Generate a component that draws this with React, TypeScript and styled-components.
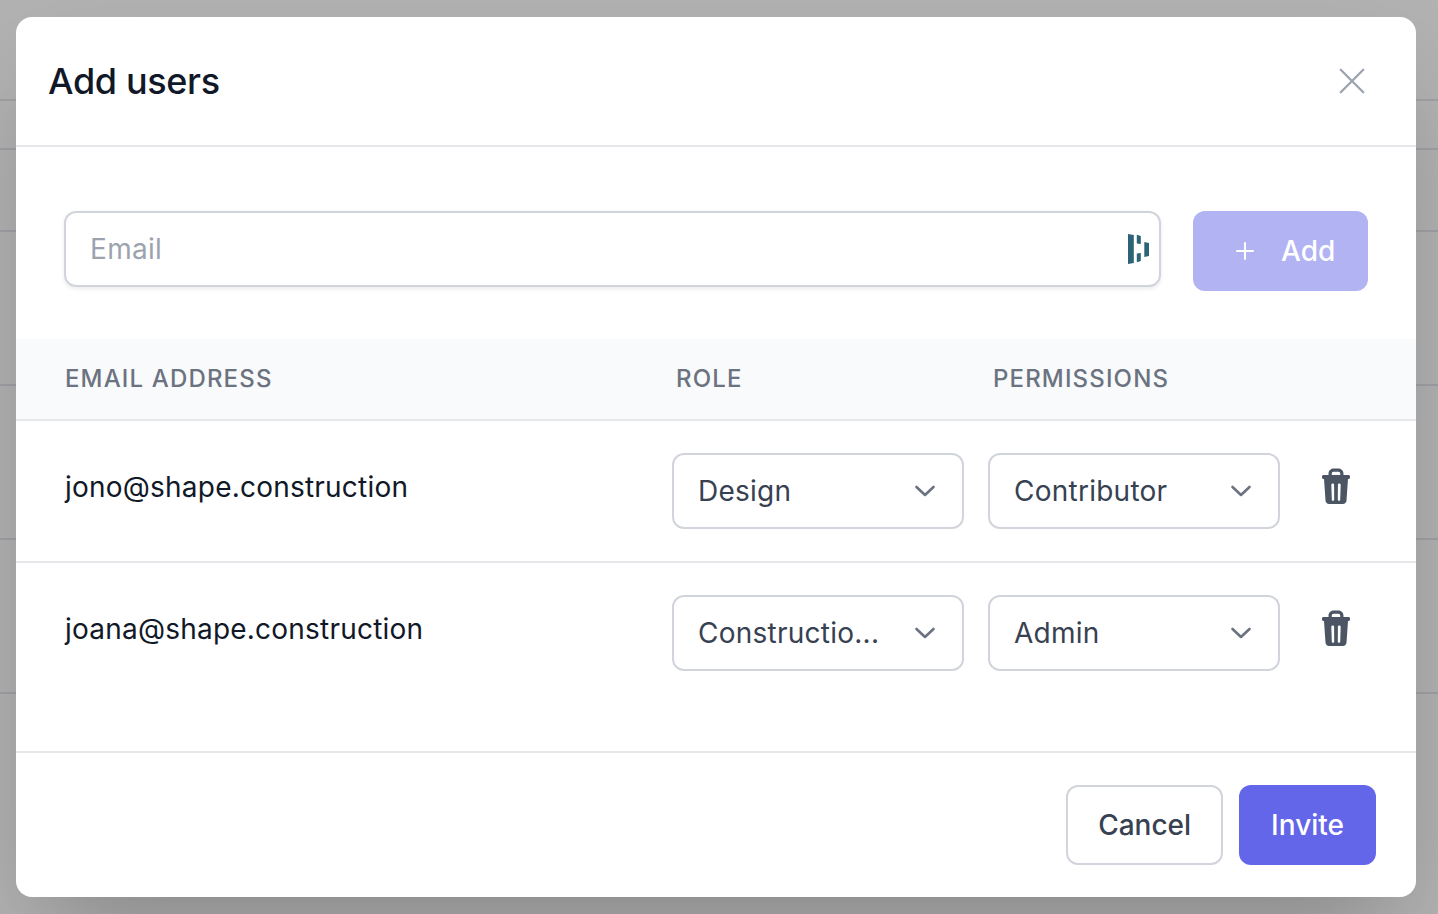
import React from 'react';
import styled, { createGlobalStyle } from 'styled-components';

const GlobalStyle = createGlobalStyle`
  html, body {
    margin: 0;
    height: 100%;
    overflow: hidden;
  }
  body {
    font-family: Inter, "Liberation Sans", sans-serif;
    -webkit-font-smoothing: antialiased;
  }
  * {
    box-sizing: border-box;
  }
`;

const Page = styled.div`
  position: relative;
  width: 1438px;
  height: 914px;
  overflow: hidden;
  background: #fff;
`;

const BehindRow = styled.div<{ $height: number }>`
  height: ${({ $height }) => $height}px;
  border-bottom: 2px solid #e5e7eb;
`;

const Backdrop = styled.div`
  position: absolute;
  inset: 0;
  background: rgba(0, 0, 0, 0.3);
`;

const Modal = styled.div`
  position: absolute;
  left: 16px;
  top: 17px;
  width: 1400px;
  height: 880px;
  background: #fff;
  border-radius: 16px;
  box-shadow: 0 50px 100px -24px rgba(0, 0, 0, 0.25);
  display: flex;
  flex-direction: column;
  overflow: hidden;
`;

const Header = styled.header`
  height: 130px;
  flex: none;
  border-bottom: 2px solid #e5e7eb;
  padding: 0 40px 0 32px;
  display: flex;
  align-items: center;
  justify-content: space-between;
`;

const Title = styled.h2`
  margin: 0;
  font-size: 36px;
  line-height: 48px;
  font-weight: 500;
  letter-spacing: -0.35px;
  color: #111827;
`;

const CloseButton = styled.button`
  width: 48px;
  height: 48px;
  padding: 0;
  border: none;
  background: none;
  color: #9ca3af;
  display: flex;
  align-items: center;
  justify-content: center;
`;

const AddRow = styled.div`
  flex: none;
  display: flex;
  align-items: flex-start;
  gap: 32px;
  padding: 64px 48px 48px;
`;

const InputWrap = styled.div`
  position: relative;
  flex: 1;
`;

const EmailInput = styled.input`
  display: block;
  width: 100%;
  height: 76px;
  padding: 0 24px;
  border: 2px solid #d1d5db;
  border-radius: 12px;
  box-shadow: 0 2px 4px rgba(0, 0, 0, 0.08);
  font: 400 28px Inter, sans-serif;
  letter-spacing: 0.3px;
  color: #111827;
  outline: none;

  &::placeholder {
    color: #9ca3af;
  }
`;

const FieldLogo = styled.svg`
  position: absolute;
  right: 11px;
  top: 23px;
`;

const Button = styled.button<{ $variant: 'primary' | 'disabled' | 'outline' }>`
  height: 80px;
  padding: ${({ $variant }) =>
    $variant === 'disabled' ? '0 32px 0 40px' : $variant === 'outline' ? '0 30px' : '0 32px'};
  border-radius: 12px;
  border: ${({ $variant }) => ($variant === 'outline' ? '2px solid #d1d5db' : 'none')};
  background: ${({ $variant }) =>
    $variant === 'primary' ? '#6366e9' : $variant === 'disabled' ? '#b2b3f2' : '#fff'};
  color: ${({ $variant }) => ($variant === 'outline' ? '#374151' : '#fff')};
  font: 500 28px Inter, sans-serif;
  display: flex;
  align-items: center;
  gap: 24px;
`;

const AddButton = styled(Button)`
  width: 175px;
`;

const TableGrid = styled.div`
  display: grid;
  grid-template-columns: 584px 292px 292px 64px;
  column-gap: 24px;
  padding: 0 48px;
`;

const TableHead = styled(TableGrid)`
  height: 82px;
  flex: none;
  align-items: center;
  padding-bottom: 2px;
  background: #f9fafb;
  border-bottom: 2px solid #e5e7eb;
`;

const HeadCell = styled.span<{ $inset: number }>`
  padding-left: ${({ $inset }) => $inset}px;
  font-size: 24px;
  font-weight: 500;
  letter-spacing: 1.15px;
  text-transform: uppercase;
  color: #6b7280;
`;

const UserRow = styled(TableGrid)<{ $last?: boolean }>`
  flex: none;
  height: ${({ $last }) => ($last ? '190px' : '142px')};
  padding-top: 32px;
  align-items: start;
  border-bottom: 2px solid #e5e7eb;
`;

const UserEmail = styled.div`
  padding-left: 1px;
  font-size: 28px;
  line-height: 68px;
  letter-spacing: 0.22px;
  color: #111827;
`;

const Select = styled.div`
  height: 76px;
  padding: 0 25px 0 24px;
  border: 2px solid #d1d5db;
  border-radius: 12px;
  display: flex;
  align-items: center;
  justify-content: space-between;
  font-size: 28px;
  letter-spacing: 0.25px;
  color: #374151;
  background: #fff;
`;

const SelectValue = styled.span`
  white-space: nowrap;
`;

const IconButton = styled.button`
  height: 66px;
  padding: 0;
  border: none;
  background: none;
  color: #4b5563;
  display: flex;
  align-items: center;
  justify-content: center;
`;

const Footer = styled.footer`
  flex: 1;
  padding: 32px 40px;
  display: flex;
  align-items: flex-start;
  justify-content: flex-end;
  gap: 16px;
`;

const XIcon = () => (
  <svg width="36" height="36" viewBox="0 0 24 24" fill="none" stroke="currentColor" strokeWidth="1.5" strokeLinecap="round">
    <path d="M4.5 4.5l15 15M19.5 4.5l-15 15" />
  </svg>
);

const PlusIcon = () => (
  <svg width="24" height="24" viewBox="0 0 24 24" fill="none" stroke="currentColor" strokeWidth="2" strokeLinecap="round">
    <path d="M12 4v16M4 12h16" />
  </svg>
);

const Chevron = () => (
  <svg width="24" height="24" viewBox="0 0 24 24" fill="none" stroke="#6b7280" strokeWidth="2.6" strokeLinecap="round" strokeLinejoin="round">
    <path d="M3.5 8l8.5 8 8.5-8" />
  </svg>
);

const TrashIcon = () => (
  <svg width="28" height="36" viewBox="0 0 28 36" fill="currentColor">
    <path
      fillRule="evenodd"
      d="M6.500 7V5.500C6.500 2.500 9 .5 12 .5h4c3 0 5.500 2 5.500 5V7h5c.9 0 1.500.6 1.500 1.500v1c0 .9-.6 1.500-1.500 1.500H26l-1.500 21.500c-.2 2.300-1.700 3.500-3.500 3.500H7c-1.800 0-3.300-1.200-3.500-3.500L2 11h-.5C.6 11 0 10.400 0 9.500v-1C0 7.600.6 7 1.500 7h5zM9.800 7h8.400V5.500c0-1-.8-1.700-1.800-1.700h-4.800c-1 0-1.800.7-1.800 1.700V7zM10.700 15.500c-.9 0-1.400.6-1.400 1.400l.5 14.500c0 .8.500 1.300 1.200 1.300s1.200-.5 1.200-1.300l-.1-14.500c0-.8-.5-1.400-1.400-1.400zM17.300 15.500c-.9 0-1.400.6-1.400 1.400l-.1 14.500c0 .8.500 1.300 1.200 1.300s1.200-.5 1.200-1.300l.5-14.500c0-.8-.5-1.400-1.400-1.400z"
    />
  </svg>
);

const users = [
  { email: 'jono@shape.construction', role: 'Design', permission: 'Contributor' },
  { email: 'joana@shape.construction', role: 'Constructio...', permission: 'Admin' },
];

const App: React.FC = () => (
  <Page>
    <GlobalStyle />
    <BehindRow $height={101} />
    <BehindRow $height={49} />
    <BehindRow $height={82} />
    <BehindRow $height={154} />
    <BehindRow $height={154} />
    <BehindRow $height={154} />
    <Backdrop />
    <Modal>
      <Header>
        <Title>Add users</Title>
        <CloseButton aria-label="Close">
          <XIcon />
        </CloseButton>
      </Header>
      <AddRow>
        <InputWrap>
          <EmailInput placeholder="Email" />
          <FieldLogo width="22" height="30" viewBox="0 0 22 30" fill="#2c6378">
            <path d="M0 0l5.800 1v28l-5.800 1z" />
            <path d="M8.800 .8l4 1.200v8l-4-.5z" />
            <path d="M8.800 19.500l4-.5v8l-4 1.200z" />
            <path d="M16.300 8l4.700 1v13l-4.700 1z" />
          </FieldLogo>
        </InputWrap>
        <AddButton $variant="disabled">
          <PlusIcon />
          Add
        </AddButton>
      </AddRow>
      <TableHead>
        <HeadCell $inset={1}>Email address</HeadCell>
        <HeadCell $inset={4}>Role</HeadCell>
        <HeadCell $inset={5}>Permissions</HeadCell>
      </TableHead>
      {users.map((user, i) => (
        <UserRow key={user.email} $last={i === users.length - 1}>
          <UserEmail>{user.email}</UserEmail>
          <Select>
            <SelectValue>{user.role}</SelectValue>
            <Chevron />
          </Select>
          <Select>
            <SelectValue>{user.permission}</SelectValue>
            <Chevron />
          </Select>
          <IconButton aria-label="Remove user">
            <TrashIcon />
          </IconButton>
        </UserRow>
      ))}
      <Footer>
        <Button $variant="outline">Cancel</Button>
        <Button $variant="primary">Invite</Button>
      </Footer>
    </Modal>
  </Page>
);

export default App;
